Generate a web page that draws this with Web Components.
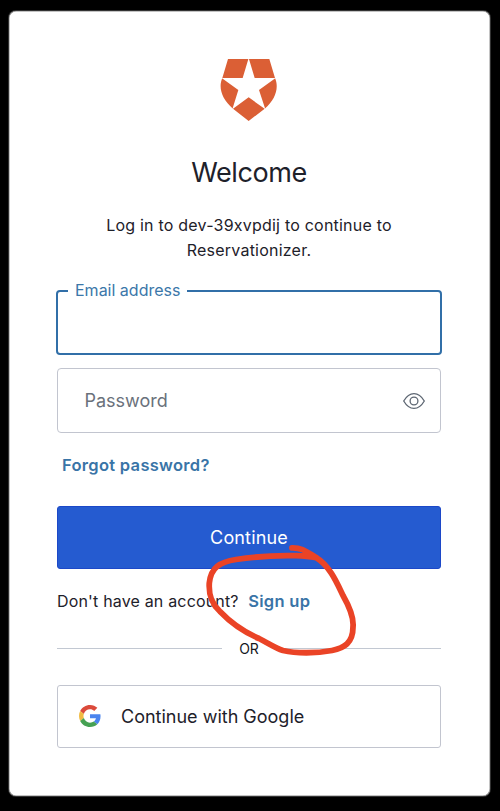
<!DOCTYPE html>
<html lang="en"><head><meta charset="utf-8"><title>Log in</title>
<style>
html,body{margin:0;height:811px;background:#000;overflow:hidden}
body{font-family:Inter,"Liberation Sans",sans-serif;color:#1e212a}
</style></head><body>
<login-page></login-page>
<script>
const define=(name,html)=>customElements.define(name,class extends HTMLElement{
  constructor(){super();this.attachShadow({mode:'open'}).innerHTML=html;}
});
define('brand-logo',`<style>:host{display:block;height:64px}svg{display:block;margin:auto}</style>
<svg width="60" height="64" viewBox="57 39 180 192"><path fill="#db5f35" d="M84 42H208L225 99C238 128 226 164 194 191L146 228L99 191C66 164 54 128 67 99Z"/><path fill="#fff" d="M146 39L164 99H227L177 135L196 193L146 157L97 193L115 135L65 99H128Z"/></svg>`);
define('eye-icon',`<style>:host{display:block;height:18px}svg{display:block}</style>
<svg width="24" height="18" viewBox="0 0 24 18" fill="none" stroke="#5d6672" stroke-width="1.3"><path d="M1.7 9Q6 1.6 12 1.6T22.3 9Q18 16.4 12 16.4T1.7 9Z"/><circle cx="12" cy="9" r="3.9"/></svg>`);
define('google-icon',`<style>:host{display:block;width:22px;height:22px}svg{display:block}</style>
<svg width="22" height="22" viewBox="0 0 48 48"><path fill="#db4a3b" d="M24 9.5c3.54 0 6.71 1.22 9.21 3.6l6.85-6.85C35.9 2.38 30.47 0 24 0 14.62 0 6.51 5.38 2.56 13.22l7.98 6.19C12.43 13.72 17.74 9.5 24 9.5z"/><path fill="#4a84ee" d="M46.98 24.55c0-1.57-.15-3.09-.38-4.55H24v9.02h12.94c-.58 2.96-2.26 5.48-4.78 7.18l7.73 6c4.51-4.18 7.09-10.36 7.09-17.65z"/><path fill="#f1bb42" d="M10.53 28.59c-.48-1.45-.76-2.99-.76-4.59s.27-3.14.76-4.59l-7.98-6.19C.92 16.46 0 20.12 0 24c0 3.88.92 7.54 2.56 10.78l7.97-6.19z"/><path fill="#46a153" d="M24 48c6.48 0 11.93-2.13 15.89-5.81l-7.73-6c-2.15 1.45-4.92 2.3-8.16 2.3-6.26 0-11.57-4.22-13.47-9.91l-7.98 6.19C6.51 42.62 14.62 48 24 48z"/></svg>`);
define('text-field',`<style>:host{display:flex;box-sizing:border-box;height:65px;border:1px solid #c2c5cf;border-radius:4px;align-items:center;justify-content:space-between;padding:0 14px 0 26.5px;font-size:18px;line-height:26px;color:#6a717b;position:relative}
:host([focused]){border:2px solid #316fa8;margin:0 -1px}
:host([focused]) .label{position:absolute;left:10px;top:-13px;padding:0 7px;background:#fff;color:#3b77a9;font-size:16px;line-height:22px}.label{padding-top:1px}</style><span class="label"><slot></slot></span><slot name="icon"></slot>`);
define('action-button',`<style>:host{display:flex;box-sizing:border-box;height:63px;border:1px solid #c2c5cf;border-radius:3px;align-items:center;font-size:18px;color:#1e212a;padding:0 21px}
:host([primary]){background:#255bd0;border-color:#1c48c8;color:#fff;justify-content:center;letter-spacing:.15px}
slot[name=icon]{display:block;margin-right:20px}:host([primary]) slot[name=icon]{display:none}</style><slot name="icon"></slot><span><slot></slot></span>`);
define('text-link',`<style>:host{color:#3974a7;font-weight:600;font-size:16.5px;letter-spacing:.3px}</style><slot></slot>`);
define('or-divider',`<style>:host{display:flex;align-items:center;gap:17px;font-size:14px;line-height:18px;color:#14171e}i{height:1px;flex:1;background:#c2c8d2}span{padding-top:1px}</style><i></i><span><slot></slot></span><i></i>`);
define('hand-circle',`<style>:host{position:absolute;left:0;top:0;pointer-events:none}svg{display:block}</style>
<svg width="500" height="811" fill="none" stroke="#ea4326" stroke-width="5.8" stroke-linecap="round" stroke-linejoin="round"><path d="M292 547.8C303 547.5 308 553 316 557.5C330 566 337 583 343 595.5C349 606 354 617 353 627C353 643 344 648 332 650.5C316 653.5 296 653.5 283 650.5C275 648 268 643 259 638.5C244 632 231 623 220 611.5C212 604 208.5 596 209.3 583C211 567 220 562 236 559.5C252 557 276 555.5 292 555.7C302 555 309 557 316 557.5"/></svg>`);
define('login-page',`<style>
:host{display:block;position:relative;height:811px;padding:11px 10px 15px 9px;box-sizing:border-box}
main{height:785px;box-sizing:border-box;background:#fff;border-radius:7px;padding:47px 49px 0 48px;display:flex;flex-direction:column;box-shadow:inset 0 0 0 .5px #888,0 0 0 1px #333}
h1{margin:34px 0 0;text-align:center;font-weight:400;font-size:27px;line-height:34px;letter-spacing:-.4px}
p{margin:23px 0 0;text-align:center;font-size:16px;line-height:25px;letter-spacing:.22px}
.email{margin-top:27px}.pw{margin-top:13px}.forgot{margin:21px 0 0 5px;line-height:22px}
.go{margin-top:30px}.signup{margin-top:21px;font-size:16px;letter-spacing:.17px;line-height:22px;display:flex;gap:9.5px;white-space:nowrap}
or-divider{margin-top:27px}.google{margin-top:27px}google-icon{margin-top:-1px}
</style><main><brand-logo></brand-logo><h1>Welcome</h1><p>Log in to dev-39xvpdij to continue to<br>Reservationizer.</p>
<text-field focused class="email">Email address</text-field><text-field class="pw">Password<eye-icon slot="icon"></eye-icon></text-field>
<text-link class="forgot">Forgot password?</text-link><action-button primary class="go">Continue</action-button>
<div class="signup"><span>Don't have an account?</span><text-link>Sign up</text-link></div><or-divider>OR</or-divider>
<action-button class="google"><google-icon slot="icon"></google-icon>Continue with Google</action-button></main><hand-circle></hand-circle>`);
</script></body></html>
